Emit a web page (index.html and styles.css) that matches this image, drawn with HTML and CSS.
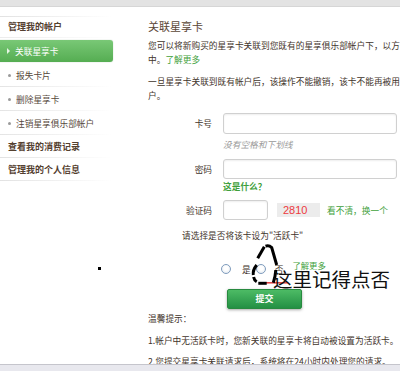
FILE: index.html
```html
<!DOCTYPE html>
<html lang="zh-CN">
<head>
<meta charset="utf-8">
<title>关联星享卡</title>
<link rel="stylesheet" href="styles.css">
</head>
<body>
<div class="topbar"></div>
<div class="page">
  <aside class="side">
    <div class="side-head first">管理我的帐户</div>
    <a class="side-item active"><span class="tri"></span>关联星享卡</a>
    <a class="side-item first-item"><span class="dot"></span>报失卡片</a>
    <a class="side-item"><span class="dot"></span>删除星享卡</a>
    <a class="side-item"><span class="dot"></span>注销星享俱乐部帐户</a>
    <div class="side-head">查看我的消费记录</div>
    <div class="side-head">管理我的个人信息</div>
  </aside>
  <main class="content">
    <h1 class="title">关联星享卡</h1>
    <p class="para">您可以将新购买的星享卡关联到您既有的星享俱乐部帐户下，以方便您将所有星享卡集中在同一帐户中。<a class="link">了解更多</a></p>
    <p class="para para2">一旦星享卡关联到既有帐户后，该操作不能撤销，该卡不能再被用于关联至任何其他的星享俱乐部帐户。</p>

    <div class="form">
      <div class="row row1">
        <label class="label">卡号</label>
        <span class="input"></span>
      </div>
      <div class="hint">没有空格和下划线</div>
      <div class="row row2">
        <label class="label">密码</label>
        <span class="input"></span>
      </div>
      <div class="what">这是什么？</div>
      <div class="row row3">
        <label class="label">验证码</label>
        <span class="input small"></span>
        <span class="captcha">2810</span>
        <a class="refresh">看不清，换一个</a>
      </div>
      <div class="ask">请选择是否将该卡设为"活跃卡"</div>
      <div class="radios">
        <span class="radio"></span><span class="opt-yes">是</span>
        <span class="radio radio2"></span><span class="opt-no">否</span>
        <a class="more">了解更多</a>
      </div>
      <div class="submit">提交</div>
    </div>

    <div class="tips-title">温馨提示：</div>
    <p class="tip">1.帐户中无活跃卡时，您新关联的星享卡将自动被设置为活跃卡。</p>
    <p class="tip tip2">2.您提交星享卡关联请求后，系统将在24小时内处理您的请求。</p>
  </main>
</div>

<svg class="scribble" width="60" height="45" viewBox="0 0 60 45">
  <line x1="20" y1="38.8" x2="43" y2="38.8" stroke="#e23b3b" stroke-width="1.5"/>
  <g fill="none" stroke="#000" stroke-width="3" stroke-linecap="butt">
    <path d="M12.7 14.3 L19.3 2.7"/>
    <path d="M20.5 2.2 Q24 1 26.7 3.6 L31.7 21"/>
    <path d="M30.8 26 Q30.3 33 28.3 38.7"/>
    <path d="M11.7 21 Q7.6 26 8.3 31"/>
    <path d="M8.6 33 Q9.3 36.5 11.7 37.8"/>
    <path d="M13.3 39.3 L21.7 39.3"/>
  </g>
</svg>
<div class="note">这里记得点否</div>
<div class="mark"></div>
<div class="statusbar"></div>
</body>
</html>
```

FILE: styles.css
```css
html, body {
  margin: 0;
  padding: 0;
}
body {
  font-family: "Noto Sans CJK SC", "Noto Sans CJK TC", sans-serif;
  font-size: 8.7px;
  color: #3f342b;
  background: #fff;
  height: 371px;
  overflow: hidden;
}
a { text-decoration: none; }
p, h1 { margin: 0; }

.topbar {
  height: 6px;
  background: #e3e3e3;
  border-bottom: 1px solid #d6d6d6;
}

.page {
  display: flex;
}

/* sidebar */
.side {
  width: 112px;
  flex: none;
  padding-top: 9px;
}
.side-head {
  height: 23px;
  line-height: 23px;
  padding-left: 8px;
  font-weight: bold;
  font-size: 9px;
  color: #54402f;
  background: linear-gradient(to right, #e2e2e2, #fff) left bottom / 100% 1px no-repeat;
}
.side-head.first {
  height: 22px;
  line-height: 22px;
  background:
    linear-gradient(to right, #e2e2e2, #fff) left top / 100% 1px no-repeat,
    linear-gradient(to right, #ececec, #fff) left bottom / 100% 1px no-repeat;
}
.side-item {
  display: flex;
  align-items: center;
  height: 24px;
  padding-left: 8px;
  color: #55473a;
  background: linear-gradient(to right, #e4e4e4, #fff) left bottom / 100% 1px no-repeat;
}
.side-item.first-item {
  margin-top: 1px;
}
.side-item .dot {
  width: 3px;
  height: 3px;
  border-radius: 50%;
  background: #9a9a9a;
  margin-right: 5px;
}
.side-item.active {
  width: 106px;
  height: 22px;
  margin-top: 2px;
  padding-left: 7px;
  color: #fff;
  background: linear-gradient(#79c876, #55ad52);
  border-radius: 0 3px 3px 0;
  box-shadow: 0 0 1px rgba(40, 110, 40, 0.5);
}
.tri {
  width: 0;
  height: 0;
  border-left: 3px solid #e6f5e4;
  border-top: 3px solid transparent;
  border-bottom: 3px solid transparent;
  margin-right: 5px;
}

/* content */
.content {
  flex: none;
  width: 385px;
  margin-left: 36px;
  padding-top: 12px;
}
.title {
  font-size: 11px;
  line-height: 14px;
  font-weight: normal;
  color: #5a4636;
}
.para {
  margin-top: 6px;
  line-height: 14px;
}
.para2 {
  margin-top: 8px;
}
.link, .more, .refresh, .what {
  color: #3f9f3c;
}

.form {
  margin-top: 10px;
}
.row {
  display: flex;
  align-items: center;
  height: 21px;
}
.row2, .row3 {
  height: 20px;
}
.row2 { margin-top: 7px; }
.row3 { margin-top: 6px; }
.label {
  width: 64px;
  margin-right: 11px;
  text-align: right;
}
.input {
  width: 174px;
  height: 100%;
  box-sizing: border-box;
  border: 1px solid #d0d0d0;
  border-radius: 3px;
  box-shadow: inset 0 1px 2px rgba(0, 0, 0, 0.07);
  background: #fff;
}
.input.small {
  width: 45px;
}
.hint {
  margin: 4px 0 0 75px;
  line-height: 14px;
  color: #999;
  font-style: italic;
}
.what {
  margin: 1px 0 0 75px;
  line-height: 14px;
  font-weight: bold;
}
.captcha {
  margin-left: 9px;
  width: 43px;
  height: 14px;
  box-sizing: border-box;
  padding-left: 6px;
  background: #ececec;
  color: #ee3a3e;
  font-family: "Liberation Sans", Arial, sans-serif;
  font-size: 11px;
  line-height: 14px;
}
.refresh {
  margin-left: 7px;
}
.ask {
  margin: 9px 0 0 34px;
  line-height: 14px;
}
.radios {
  display: flex;
  align-items: center;
  height: 14px;
  margin: 19px 0 0 73px;
}
.radio {
  width: 10px;
  height: 10px;
  box-sizing: border-box;
  border-radius: 50%;
  border: 1px solid #7f9cbd;
  background: radial-gradient(circle at 50% 40%, #fff 30%, #dfe6ee);
}
.opt-yes { margin-left: 11px; }
.radio2 { margin-left: 5px; }
.opt-no { margin-left: 9px; }
.more {
  margin-left: 9px;
  align-self: flex-start;
  margin-top: -3px;
  font-size: 8.4px;
}
.submit {
  margin: 13px 0 0 79px;
  width: 75px;
  height: 20px;
  box-sizing: border-box;
  line-height: 18px;
  text-align: center;
  color: #fff;
  font-weight: bold;
  font-size: 9px;
  background: linear-gradient(#4dbb65, #239044);
  border: 1px solid #278a3f;
  border-radius: 2px;
  box-shadow: 0 1px 3px rgba(0, 0, 0, 0.35);
}
.tips-title {
  margin-top: 3px;
  line-height: 14px;
}
.tip {
  margin-top: 8px;
  line-height: 14px;
}
.tip2 {
  margin-top: 7px;
}

/* overlays */
.scribble {
  position: absolute;
  left: 245px;
  top: 244px;
}
.note {
  position: absolute;
  left: 273px;
  top: 268px;
  font-size: 19.5px;
  line-height: 22px;
  color: #111;
}
.mark {
  position: absolute;
  left: 98px;
  top: 267px;
  width: 3px;
  height: 3px;
  background: #000;
}
.statusbar {
  position: fixed;
  left: 0;
  right: 0;
  bottom: 0;
  height: 6px;
  background: #e8e8ee;
  border-top: 1px solid #c5c5cc;
}
```
